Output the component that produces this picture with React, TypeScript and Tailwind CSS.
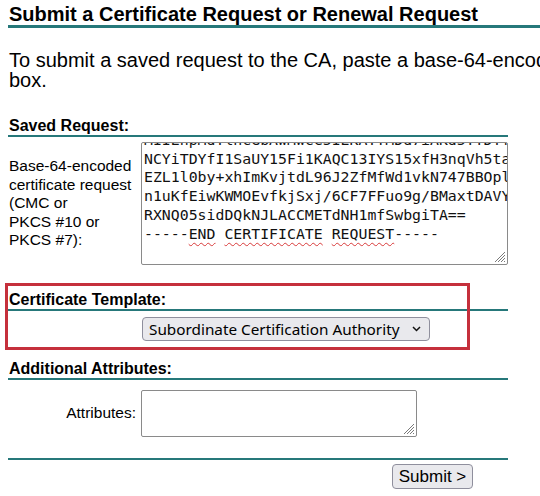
import React from "react";

const teal = "border-[#26787a]";

function ResizeHandle() {
  return (
    <svg
      className="absolute right-[1px] bottom-[1px]"
      width="12"
      height="12"
      viewBox="0 0 12 12"
    >
      <line x1="11" y1="1" x2="1" y2="11" stroke="#7a7a7a" strokeWidth="1" />
      <line x1="11" y1="4" x2="4" y2="11" stroke="#7a7a7a" strokeWidth="1" />
      <line x1="11" y1="7" x2="7" y2="11" stroke="#7a7a7a" strokeWidth="1" />
      <line x1="11" y1="10" x2="10" y2="11" stroke="#7a7a7a" strokeWidth="1" />
    </svg>
  );
}

const wavy =
  "underline decoration-wavy decoration-[#d83a3a] decoration-1 underline-offset-[3px]";

export default function App() {
  return (
    <div className="relative w-[540px] h-[496px] overflow-hidden bg-white text-black font-['Liberation_Sans',Arial,sans-serif]">
      {/* Heading */}
      <div className={`ml-[8px] w-[560px] pt-[3px] border-b-[3px] ${teal}`}>
        <h1 className="pl-[1px] text-[20px] leading-[22px] font-bold whitespace-nowrap">
          Submit a Certificate Request or Renewal Request
        </h1>
      </div>

      {/* Intro paragraph */}
      <p className="mt-[22px] ml-[9px] text-[20px] leading-[20px] whitespace-nowrap">
        To submit a saved request to the CA, paste a base-64-encoded CMC or
        PKCS #10 certificate request or PKCS #7 renewal request generated by an
        external source (such as a Web server) in the Saved Request
        <br />
        box.
      </p>

      <div className="ml-[8px] w-[500px]">
        {/* Saved Request */}
        <div
          className={`mt-[27px] pl-[1px] text-[16px] leading-[18px] font-bold border-b-2 ${teal}`}
        >
          Saved Request:
        </div>
        <div className="mt-[5px] flex items-center">
          <div className="w-[133px] pl-[1px] text-[15.5px] leading-[18.5px] whitespace-nowrap">
            Base-64-encoded
            <br />
            certificate request
            <br />
            (CMC or
            <br />
            PKCS #10 or
            <br />
            PKCS #7):
          </div>
          <div className="relative w-[367px] h-[123px] border border-[#8a8a8a] rounded-[2px] overflow-hidden bg-white">
            <div className="-mt-[12px] pl-[2px] font-['DejaVu_Sans_Mono',monospace] text-[14.85px] leading-[18.7px] whitespace-pre text-[#111]">
              <div>MIIEnpMdTlhcGbAwMwcC5IEKAYTMDd7iAKd5YTDYfNlAL</div>
              <div>NCYiTDYfI1SaUY15Fi1KAQC13IYS15xfH3nqVh5taQ</div>
              <div>EZL1l0by+xhImKvjtdL96J2ZfMfWd1vkN747BBOplK</div>
              <div>n1uKfEiwKWMOEvfkjSxj/6CF7FFuo9g/BMaxtDAVYz</div>
              <div>RXNQ05sidDQkNJLACCMETdNH1mfSwbgiTA==</div>
              <div>
                -----<span className={wavy}>END</span>{" "}
                <span className={wavy}>CERTIFICATE</span>{" "}
                <span className={wavy}>REQUEST</span>-----
              </div>
            </div>
            <ResizeHandle />
          </div>
        </div>

        {/* Certificate Template */}
        <div
          className={`mt-[26px] pl-[1px] text-[16px] leading-[18px] font-bold border-b-2 ${teal}`}
        >
          Certificate Template:
        </div>
        <div className="mt-[6px] pl-[134px]">
          <div className="w-[288px] h-[24px] flex items-center justify-between pl-[6px] pr-[8px] border border-[#8f8f9d] rounded-[4px] bg-[#e9e9ed] font-['Noto_Sans',sans-serif] text-[15.3px] leading-[20px] whitespace-nowrap">
            <span>Subordinate Certification Authority</span>
            <svg width="9" height="6" viewBox="0 0 9 6">
              <polyline
                points="1,1 4.5,4.5 8,1"
                fill="none"
                stroke="#111"
                strokeWidth="1.5"
              />
            </svg>
          </div>
        </div>

        {/* Additional Attributes */}
        <div
          className={`mt-[19px] pl-[1px] text-[16px] leading-[18px] font-bold border-b-2 ${teal}`}
        >
          Additional Attributes:
        </div>
        <div className="mt-[10px] flex items-center">
          <div className="w-[133px] pr-[5px] text-right text-[15.5px] leading-[18.5px] whitespace-nowrap">
            Attributes:
          </div>
          <div className="relative w-[276px] h-[47px] border border-[#8a8a8a] rounded-[2px] bg-white">
            <ResizeHandle />
          </div>
        </div>

        <div className={`mt-[21px] border-t-2 ${teal}`} />
        <div className="mt-[4px] ml-[384px]">
          <div className="w-[81px] h-[25px] flex items-center justify-center border border-[#8f8f9d] rounded-[4px] bg-[#e9e9ed] text-[17px] leading-[20px] whitespace-nowrap">
            Submit &gt;
          </div>
        </div>
      </div>

      {/* Red annotation box */}
      <div className="absolute left-[5px] top-[283px] w-[465px] h-[67px] border-[3px] border-[#c5303c]" />
    </div>
  );
}
